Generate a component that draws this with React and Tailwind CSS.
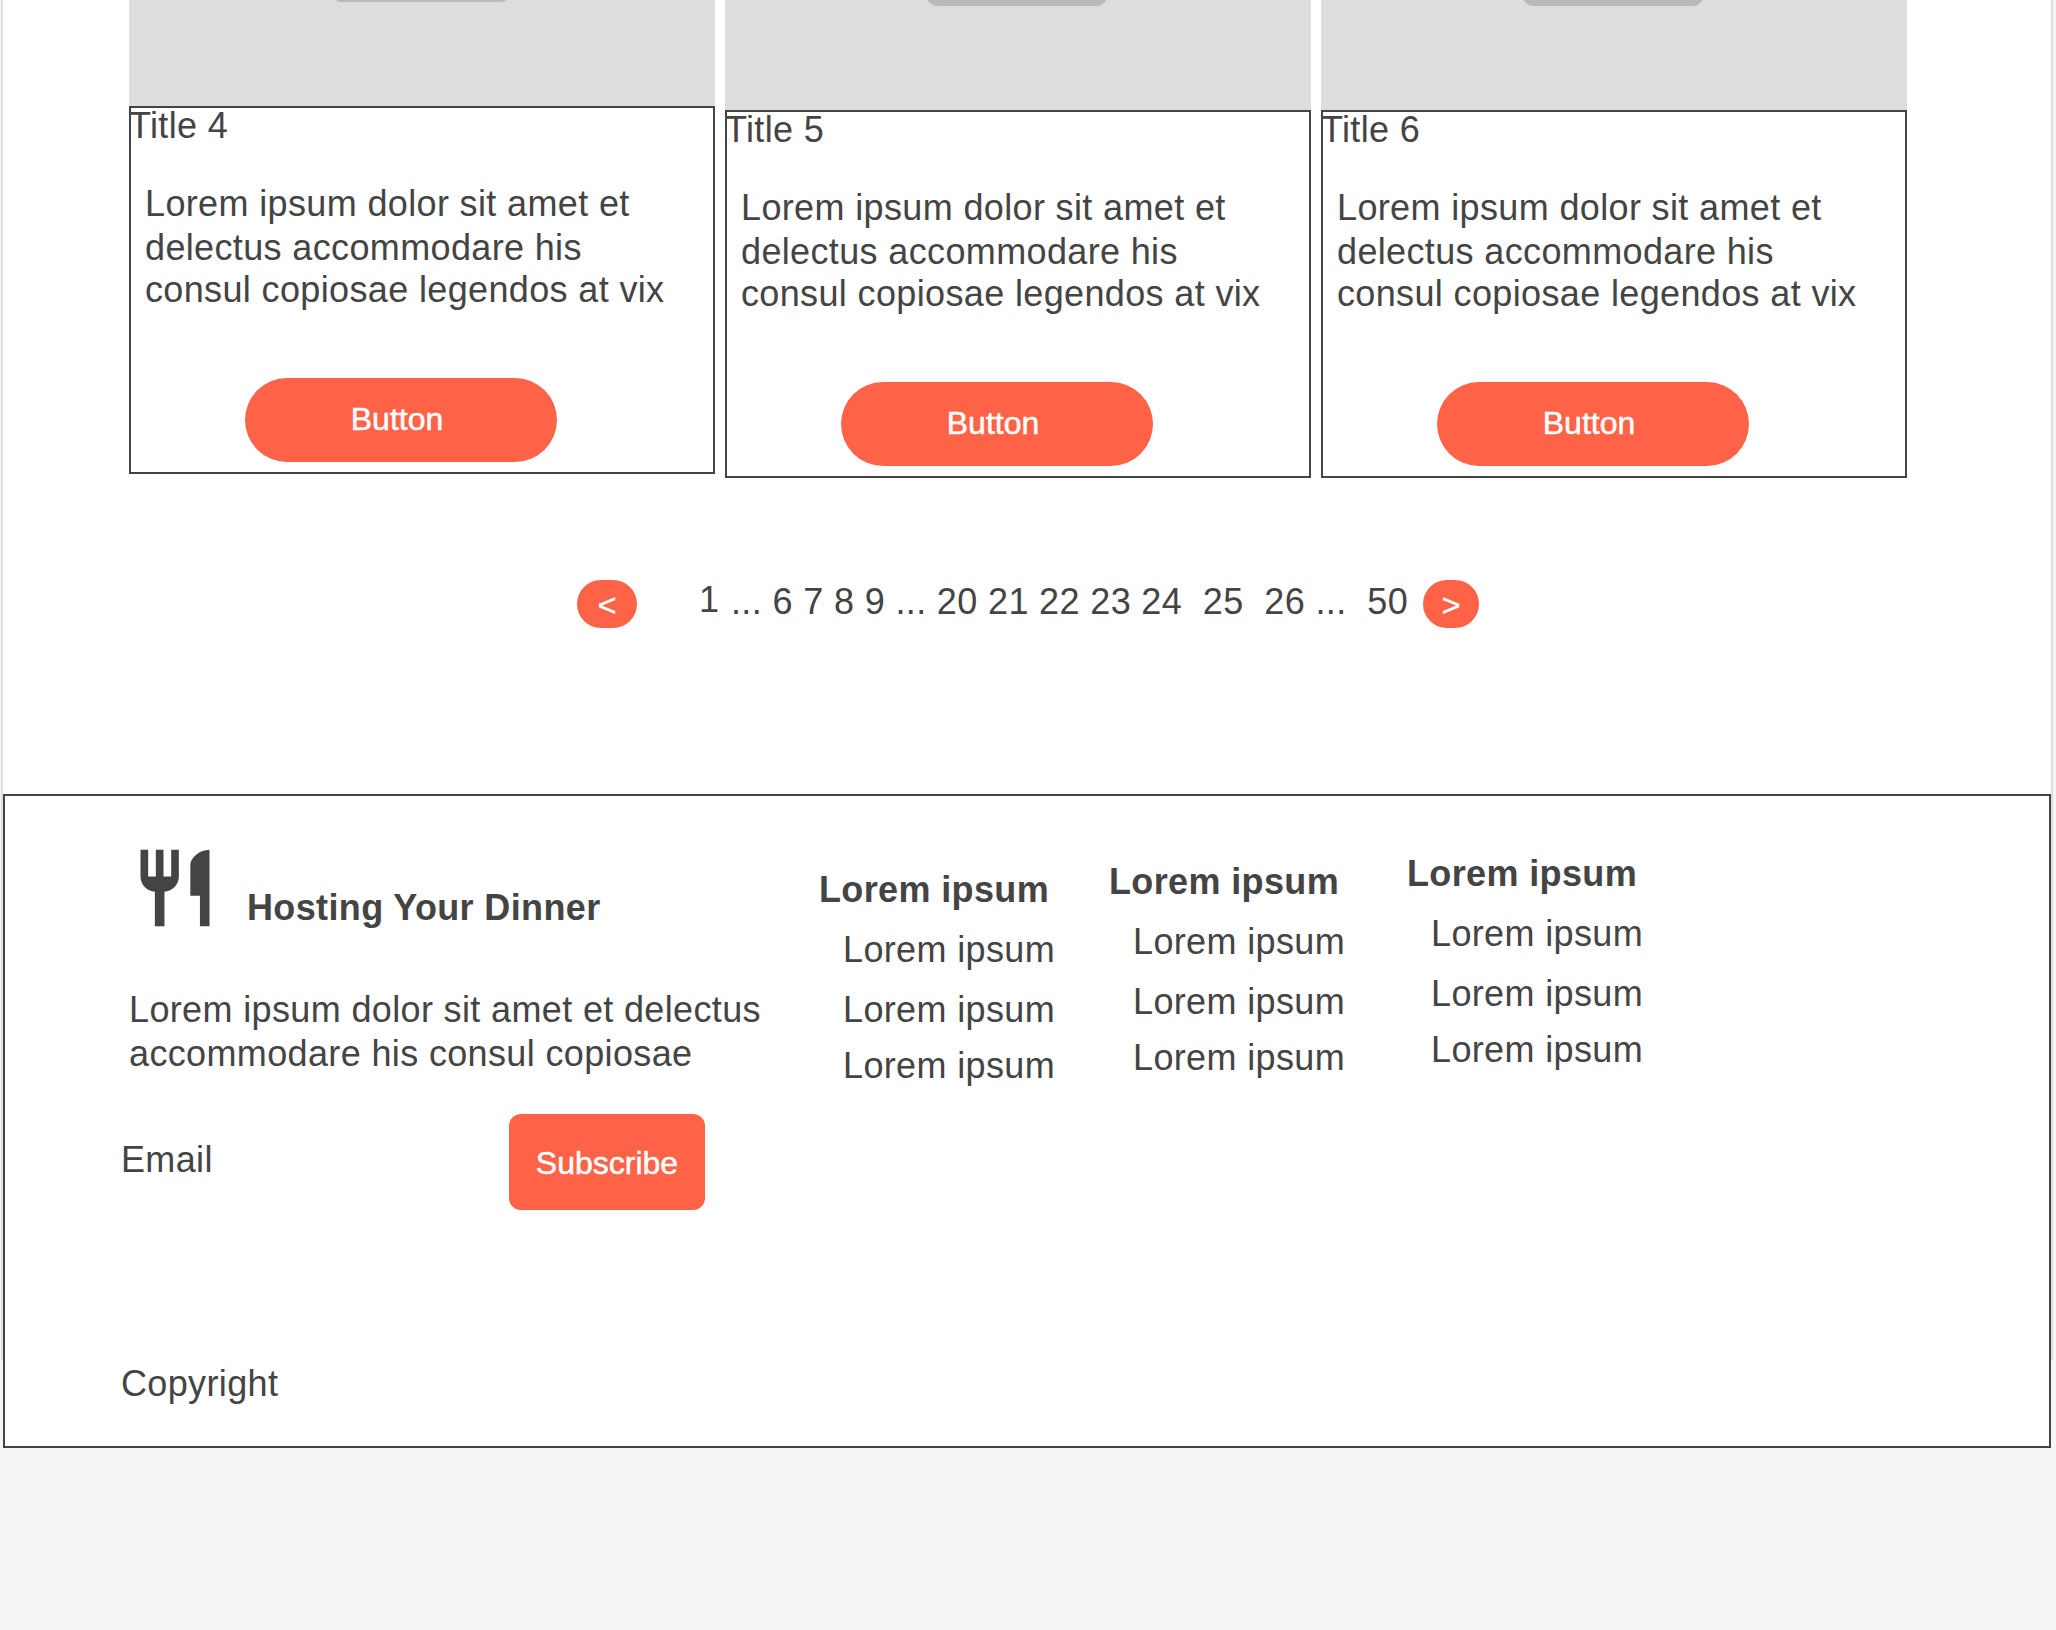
import React from "react";

const cards = [
  { title: "Title 4", image: "h-[106px]", tagBox: "-mt-[38px]" },
  { title: "Title 5", image: "h-[110px]", tagBox: "-mt-[34px]" },
  { title: "Title 6", image: "h-[110px]", tagBox: "-mt-[34px]" },
];

const columns = ["mt-[74px] w-[290px]", "mt-[66px] w-[298px]", "mt-[58px] w-[290px]"];

const buttonBase =
  "bg-[#ff6347] text-[32px] tracking-normal text-white [-webkit-text-stroke:0.5px_white]";

function Card({ title, image, tagBox }) {
  return (
    <article className="w-[586px]">
      <div className={`${image} overflow-hidden bg-[#ddd]`}>
        <div className={`${tagBox} ml-[201px] h-10 w-[182px] rounded-[12px] bg-[#b9b9b9]`} />
      </div>
      <div className="flex h-[368px] flex-col border-2 border-[#444]">
        <h3 className="-mt-0.5 -ml-0.5 leading-[40px]">{title}</h3>
        <p className="mt-[38px] ml-[14px] whitespace-nowrap leading-[40px]">
          <span className="mb-1 block">Lorem ipsum dolor sit amet et</span>
          <span className="mb-0.5 block">delectus accommodare his</span>
          <span className="block">consul copiosae legendos at vix</span>
        </p>
        <button className={`${buttonBase} mt-auto mb-2.5 ml-[114px] h-[84px] w-[312px] rounded-[42px] pr-2 pb-0.5`}>
          Button
        </button>
      </div>
    </article>
  );
}

export default function App() {
  return (
    <div className="flow-root h-[1630px] w-[2056px] overflow-hidden bg-[#f5f5f5] font-['Liberation_Sans',Arial,sans-serif] text-[36px] tracking-[0.36px] text-[#444]">
      <div className="ml-px h-[1360px] w-[2052px] border-x-2 border-[#ddd] bg-white">
        <main className="h-[794px]">
          <section className="ml-[126px] flex items-start gap-2.5">
            {cards.map((c) => (
              <Card key={c.title} {...c} />
            ))}
          </section>
          <nav className="mt-[102px] ml-[574px] flex h-12 whitespace-pre leading-[40px]">
            <button className={`${buttonBase} h-12 w-[60px] rounded-[24px] pt-0.5`}>&lt;</button>
            <span className="ml-[62px] w-[32px]">1</span>
            <span className="mt-0.5 w-[692px]">... 6 7 8 9 ... 20 21 22 23 24  25  26 ...  50</span>
            <button className={`${buttonBase} h-12 w-[56px] rounded-[24px] pt-0.5`}>&gt;</button>
          </nav>
        </main>
        <footer className="flex h-[654px] w-[2048px] border-2 border-[#444] bg-white leading-[40px] whitespace-nowrap">
          <div className="w-[814px] pl-[116px]">
            <div className="flex h-[140px] pl-2">
              <svg viewBox="0 0 24 24" className="mt-[46px] h-[92px] w-[92px] fill-[#444]">
                <path d="M11 9H9V2H7v7H5V2H3v7c0 2.12 1.66 3.84 3.75 3.97V22h2.5v-9.03C11.34 12.84 13 11.12 13 9V2h-2v7zm5-3v8h2.5v8H21V2c-2.76 0-5 2.24-5 4z" />
              </svg>
              <strong className="mt-[92px] ml-[26px] h-10 font-bold">Hosting Your Dinner</strong>
            </div>
            <p className="mt-[54px] ml-2">
              <span className="mb-1 block">Lorem ipsum dolor sit amet et delectus</span>
              <span className="block">accommodare his consul copiosae</span>
            </p>
            <div className="mt-[40px] flex">
              <label className="mt-[26px] w-[388px]">Email</label>
              <button className={`${buttonBase} h-24 w-[196px] rounded-[12px] pt-0.5`}>Subscribe</button>
            </div>
            <p className="mt-[154px]">Copyright</p>
          </div>
          {columns.map((c) => (
            <div key={c} className={c}>
              <h4 className="font-bold">Lorem ipsum</h4>
              <ul className="ml-6">
                <li className="mt-5">Lorem ipsum</li>
                <li className="mt-5">Lorem ipsum</li>
                <li className="mt-4">Lorem ipsum</li>
              </ul>
            </div>
          ))}
        </footer>
      </div>
    </div>
  );
}
